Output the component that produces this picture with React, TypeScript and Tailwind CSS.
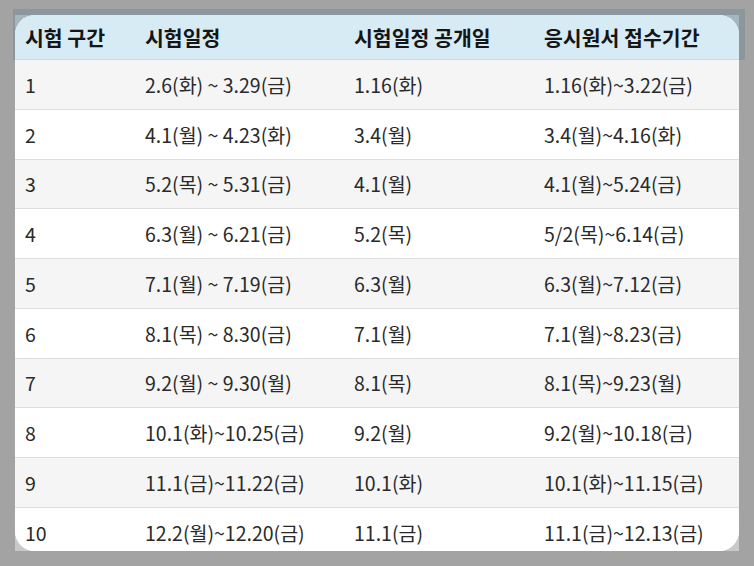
import React from 'react';

const rows: [string, string, string, string][] = [
  ['1', '2.6(화) ~ 3.29(금)', '1.16(화)', '1.16(화)~3.22(금)'],
  ['2', '4.1(월) ~ 4.23(화)', '3.4(월)', '3.4(월)~4.16(화)'],
  ['3', '5.2(목) ~ 5.31(금)', '4.1(월)', '4.1(월)~5.24(금)'],
  ['4', '6.3(월) ~ 6.21(금)', '5.2(목)', '5/2(목)~6.14(금)'],
  ['5', '7.1(월) ~ 7.19(금)', '6.3(월)', '6.3(월)~7.12(금)'],
  ['6', '8.1(목) ~ 8.30(금)', '7.1(월)', '7.1(월)~8.23(금)'],
  ['7', '9.2(월) ~ 9.30(월)', '8.1(목)', '8.1(목)~9.23(월)'],
  ['8', '10.1(화)~10.25(금)', '9.2(월)', '9.2(월)~10.18(금)'],
  ['9', '11.1(금)~11.22(금)', '10.1(화)', '10.1(화)~11.15(금)'],
  ['10', '12.2(월)~12.20(금)', '11.1(금)', '11.1(금)~12.13(금)'],
];

const headers = ['시험 구간', '시험일정', '시험일정 공개일', '응시원서 접수기간'];
const widths = ['w-[120px]', 'w-[209px]', 'w-[190px]', 'w-[205px]'];

export default function App() {
  return (
    <div
      className="w-[754px] h-[566px] bg-[#a3a3a3] pt-[9px] pl-[13px] overflow-hidden"
      style={{ fontFamily: '"Noto Sans CJK KR", "Noto Sans", sans-serif' }}
    >
      {/* darker frame behind the header */}
      <div className="w-[732px] h-[542px] bg-[linear-gradient(to_bottom,#8c979d_0px,#8c979d_51px,transparent_51px)] pt-[6px] pl-[2px]">
        <div className="w-[724px] h-[536px] bg-[linear-gradient(to_bottom,#a5b6bf_0%,#a5b6bf_50%,#c9c9c9_50%,#c9c9c9_100%)]">
          <div className="w-full h-full rounded-[20px] overflow-hidden bg-white">
            <table className="w-full border-collapse table-fixed">
              <thead>
                <tr className="h-[44.5px] bg-[#d7ebf5] border-b border-[#d6d6d6]">
                  {headers.map((h, i) => (
                    <th
                      key={h}
                      className={`${widths[i]} text-left text-[20.5px] font-bold text-[#151515] pl-[10px] align-middle whitespace-nowrap`}
                    >
                      {h}
                    </th>
                  ))}
                </tr>
              </thead>
              <tbody>
                {rows.map((r, idx) => (
                  <tr
                    key={r[0]}
                    className={`h-[49.75px] border-b border-[#dedede] ${
                      idx % 2 === 0 ? 'bg-[#f5f5f5]' : 'bg-white'
                    }`}
                  >
                    {r.map((c, i) => (
                      <td key={i} className="pl-[10px] text-[19.5px] text-[#2a2a2a] align-middle whitespace-nowrap">
                        {c}
                      </td>
                    ))}
                  </tr>
                ))}
              </tbody>
            </table>
          </div>
        </div>
      </div>
    </div>
  );
}
